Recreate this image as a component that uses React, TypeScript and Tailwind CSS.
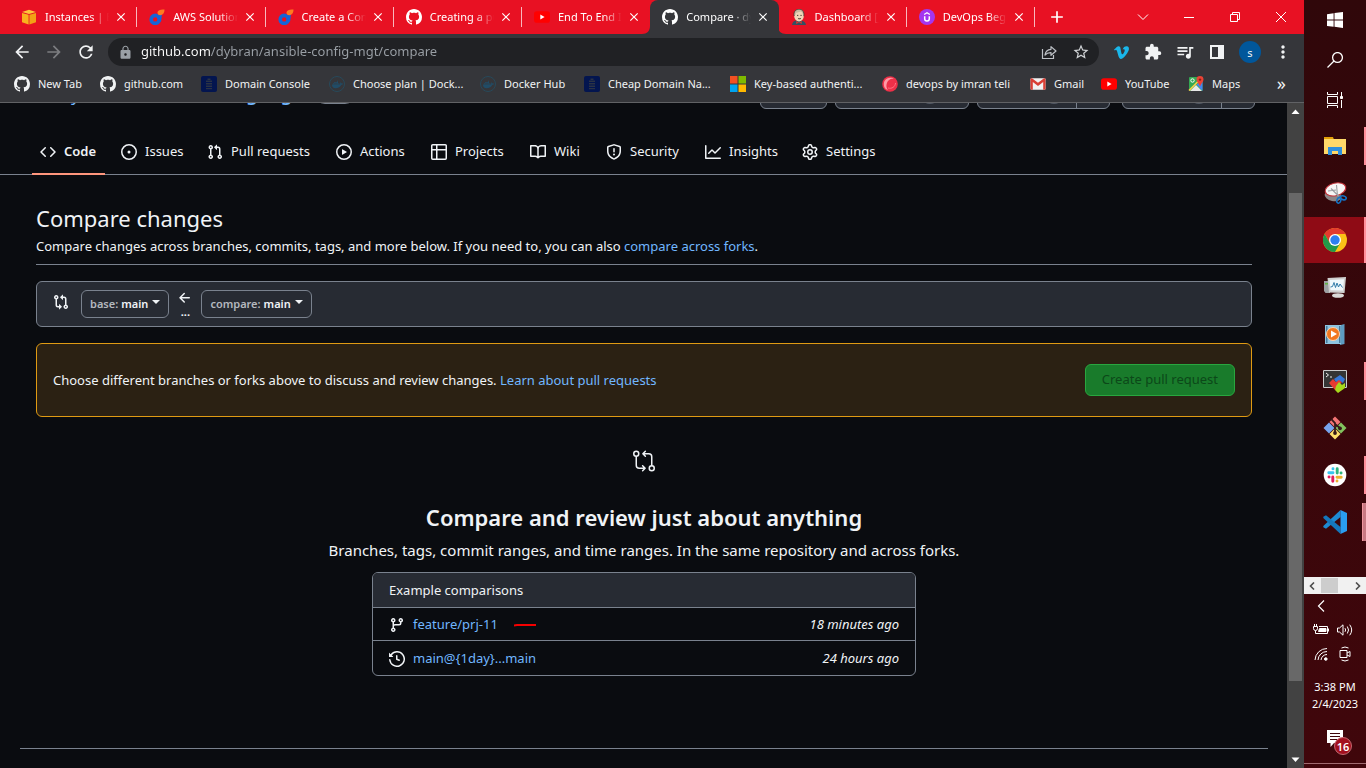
import React from "react";
import type { ReactNode } from "react";
import {
  MdAdd,
  MdArrowBack,
  MdArrowForward,
  MdClose,
  MdExtension,
  MdLock,
  MdMoreVert,
  MdQueueMusic,
  MdRefresh,
  MdStarBorder,
} from "react-icons/md";
import { FaDocker, FaVimeoV } from "react-icons/fa";
import { GoGitCompare } from "react-icons/go";

const octicons = {
  mark: "M8 0c4.42 0 8 3.58 8 8a8.013 8.013 0 0 1-5.45 7.59c-.4.08-.55-.17-.55-.38 0-.27.01-1.13.01-2.2 0-.75-.25-1.23-.54-1.48 1.78-.2 3.65-.88 3.65-3.95 0-.88-.31-1.59-.82-2.15.08-.2.36-1.02-.08-2.12 0 0-.67-.22-2.2.82-.64-.18-1.32-.27-2-.27-.68 0-1.36.09-2 .27-1.53-1.03-2.2-.82-2.2-.82-.44 1.1-.16 1.92-.08 2.12-.51.56-.82 1.28-.82 2.15 0 3.06 1.86 3.75 3.64 3.95-.23.2-.44.55-.51 1.07-.46.21-1.61.55-2.33-.66-.15-.24-.6-.83-1.23-.82-.67.01-.27.38.01.53.34.19.73.9.82 1.13.16.45.68 1.31 2.69.94 0 .67.01 1.3.01 1.49 0 .21-.15.45-.55.38A7.995 7.995 0 0 1 0 8c0-4.42 3.58-8 8-8Z",
  code: "m11.28 3.22 4.25 4.25a.75.75 0 0 1 0 1.06l-4.25 4.25a.749.749 0 0 1-1.275-.326.749.749 0 0 1 .215-.734L13.94 8l-3.72-3.72a.749.749 0 0 1 .326-1.275.749.749 0 0 1 .734.215Zm-6.56 0a.751.751 0 0 1 1.042.018.751.751 0 0 1 .018 1.042L2.06 8l3.72 3.72a.749.749 0 0 1-.326 1.275.749.749 0 0 1-.734-.215L.47 8.53a.75.75 0 0 1 0-1.06Z",
  issue: "M8 9.5a1.5 1.5 0 1 0 0-3 1.5 1.5 0 0 0 0 3ZM8 0a8 8 0 1 1 0 16A8 8 0 0 1 8 0ZM1.5 8a6.5 6.5 0 1 0 13 0 6.5 6.5 0 0 0-13 0Z",
  pull: "M1.5 3.25a2.25 2.25 0 1 1 3 2.122v5.256a2.251 2.251 0 1 1-1.5 0V5.372A2.25 2.25 0 0 1 1.5 3.25Zm5.677-.177L9.573.677A.25.25 0 0 1 10 .854V2.5h1A2.5 2.5 0 0 1 13.5 5v5.628a2.251 2.251 0 1 1-1.5 0V5a1 1 0 0 0-1-1h-1v1.646a.25.25 0 0 1-.427.177L7.177 3.427a.25.25 0 0 1 0-.354ZM3.75 2.5a.75.75 0 1 0 0 1.5.75.75 0 0 0 0-1.5Zm0 9.5a.75.75 0 1 0 0 1.5.75.75 0 0 0 0-1.5Zm8.25.75a.75.75 0 1 0 1.5 0 .75.75 0 0 0-1.5 0Z",
  play: "M8 0a8 8 0 1 1 0 16A8 8 0 0 1 8 0ZM1.5 8a6.5 6.5 0 1 0 13 0 6.5 6.5 0 0 0-13 0Zm4.879-2.773 4.264 2.559a.25.25 0 0 1 0 .428l-4.264 2.559A.25.25 0 0 1 6 10.559V5.442a.25.25 0 0 1 .379-.215Z",
  table: "M0 1.75C0 .784.784 0 1.75 0h12.5C15.216 0 16 .784 16 1.75v12.5A1.75 1.75 0 0 1 14.25 16H1.75A1.75 1.75 0 0 1 0 14.25ZM6.5 6.5v8h7.75a.25.25 0 0 0 .25-.25V6.5Zm8-1.5V1.75a.25.25 0 0 0-.25-.25H6.5V5Zm-13 1.5v7.75c0 .138.112.25.25.25H5v-8ZM5 5V1.5H1.75a.25.25 0 0 0-.25.25V5Z",
  book: "M0 1.75A.75.75 0 0 1 .75 1h4.253c1.227 0 2.317.59 3 1.501A3.743 3.743 0 0 1 11.006 1h4.245a.75.75 0 0 1 .75.75v10.5a.75.75 0 0 1-.75.75h-4.507a2.25 2.25 0 0 0-1.591.659l-.622.621a.75.75 0 0 1-1.06 0l-.622-.621A2.25 2.25 0 0 0 5.258 13H.75a.75.75 0 0 1-.75-.75Zm7.251 10.324.004-5.073-.002-2.253A2.25 2.25 0 0 0 5.003 2.5H1.5v9h3.757a3.75 3.75 0 0 1 1.994.574ZM8.755 4.75l-.004 7.322a3.752 3.752 0 0 1 1.992-.572H14.5v-9h-3.495a2.25 2.25 0 0 0-2.25 2.25Z",
  shield: "M7.467.133a1.748 1.748 0 0 1 1.066 0l5.25 1.68A1.75 1.75 0 0 1 15 3.48V7c0 1.566-.32 3.182-1.303 4.682-.983 1.498-2.585 2.813-5.032 3.855a1.697 1.697 0 0 1-1.33 0c-2.447-1.042-4.049-2.357-5.032-3.855C1.32 10.182 1 8.566 1 7V3.48a1.75 1.75 0 0 1 1.217-1.667Zm.61 1.429a.25.25 0 0 0-.153 0l-5.25 1.68a.25.25 0 0 0-.174.238V7c0 1.358.275 2.666 1.057 3.86.784 1.194 2.121 2.34 4.366 3.297a.196.196 0 0 0 .154 0c2.245-.956 3.582-2.104 4.366-3.298C13.225 9.666 13.5 8.36 13.5 7V3.48a.251.251 0 0 0-.174-.237l-5.25-1.68ZM8.75 4.75v3a.75.75 0 0 1-1.5 0v-3a.75.75 0 0 1 1.5 0ZM9 10.5a1 1 0 1 1-2 0 1 1 0 0 1 2 0Z",
  graph: "M1.5 1.75V13.5h13.75a.75.75 0 0 1 0 1.5H.75a.75.75 0 0 1-.75-.75V1.75a.75.75 0 0 1 1.5 0Zm14.28 2.53-5.25 5.25a.75.75 0 0 1-1.06 0L7 7.06 4.28 9.78a.751.751 0 0 1-1.042-.018.751.751 0 0 1-.018-1.042l3.25-3.25a.75.75 0 0 1 1.06 0L10 7.94l4.72-4.72a.751.751 0 0 1 1.042.018.751.751 0 0 1 .018 1.042Z",
  gear: "M8 0a8.2 8.2 0 0 1 .701.031C9.444.095 9.99.645 10.16 1.29l.288 1.107c.018.066.079.158.212.224.231.114.454.243.668.386.123.082.233.09.299.071l1.103-.303c.644-.176 1.392.021 1.82.63.27.385.506.792.704 1.218.315.675.111 1.422-.364 1.891l-.814.806c-.049.048-.098.147-.088.294.016.257.016.515 0 .772-.01.147.038.246.088.294l.814.806c.475.469.679 1.216.364 1.891a7.977 7.977 0 0 1-.704 1.217c-.428.61-1.176.807-1.82.63l-1.102-.302c-.067-.019-.177-.011-.3.071a5.909 5.909 0 0 1-.668.386c-.133.066-.194.158-.211.224l-.29 1.106c-.168.646-.715 1.196-1.458 1.26a8.006 8.006 0 0 1-1.402 0c-.743-.064-1.289-.614-1.458-1.26l-.289-1.106c-.018-.066-.079-.158-.212-.224a5.738 5.738 0 0 1-.668-.386c-.123-.082-.233-.09-.299-.071l-1.103.303c-.644.176-1.392-.021-1.82-.63a8.12 8.12 0 0 1-.704-1.218c-.315-.675-.111-1.422.363-1.891l.815-.806c.05-.048.098-.147.088-.294a6.214 6.214 0 0 1 0-.772c.01-.147-.038-.246-.088-.294l-.815-.806C.635 6.045.431 5.298.746 4.623a7.92 7.92 0 0 1 .704-1.217c.428-.61 1.176-.807 1.82-.63l1.102.302c.067.019.177.011.3-.071.214-.143.437-.272.668-.386.133-.066.194-.158.211-.224l.29-1.106C6.009.645 6.556.095 7.299.03 7.53.01 7.764 0 8 0Zm-.571 1.525c-.036.003-.108.036-.137.146l-.289 1.105c-.147.561-.549.967-.998 1.189-.173.086-.34.183-.5.29-.417.278-.97.423-1.529.27l-1.103-.303c-.109-.03-.175.016-.195.045-.22.312-.412.644-.573.99-.014.031-.021.11.059.19l.815.806c.411.406.562.957.53 1.456a4.709 4.709 0 0 0 0 .582c.032.499-.119 1.05-.53 1.456l-.815.806c-.081.08-.073.159-.059.19.162.346.353.677.573.989.02.03.085.076.195.046l1.102-.303c.56-.153 1.113-.008 1.53.27.161.107.328.204.501.29.447.222.85.629.997 1.189l.289 1.105c.029.109.101.143.137.146a6.6 6.6 0 0 0 1.142 0c.036-.003.108-.036.137-.146l.289-1.105c.147-.561.549-.967.998-1.189.173-.086.34-.183.5-.29.417-.278.97-.423 1.529-.27l1.103.303c.109.029.175-.016.195-.045.22-.313.411-.644.573-.99.014-.031.021-.11-.059-.19l-.815-.806c-.411-.406-.562-.957-.53-1.456a4.709 4.709 0 0 0 0-.582c-.032-.499.119-1.05.53-1.456l.815-.806c.081-.08.073-.159.059-.19a6.464 6.464 0 0 0-.573-.989c-.02-.03-.085-.076-.195-.046l-1.102.303c-.56.153-1.113.008-1.53-.27a4.44 4.44 0 0 0-.501-.29c-.447-.222-.85-.629-.997-1.189l-.289-1.105c-.029-.11-.101-.143-.137-.146a6.6 6.6 0 0 0-1.142 0ZM11 8a3 3 0 1 1-6 0 3 3 0 0 1 6 0ZM9.5 8a1.5 1.5 0 1 0-3.001.001A1.5 1.5 0 0 0 9.5 8Z",
  compare: "M9.573.677A.25.25 0 0 1 10 .854V2.5h1A2.5 2.5 0 0 1 13.5 5v5.628a2.251 2.251 0 1 1-1.5 0V5a1 1 0 0 0-1-1h-1v1.646a.25.25 0 0 1-.427.177L7.177 3.427a.25.25 0 0 1 0-.354ZM6 12v-1.646a.25.25 0 0 1 .427-.177l2.396 2.396a.25.25 0 0 1 0 .354l-2.396 2.396A.25.25 0 0 1 6 15.146V13.5H5A2.5 2.5 0 0 1 2.5 11V5.372a2.25 2.25 0 1 1 1.5 0V11a1 1 0 0 0 1 1ZM4 3.25a.75.75 0 1 0-1.5 0 .75.75 0 0 0 1.5 0ZM12.75 12a.75.75 0 1 0 0 1.5.75.75 0 0 0 0-1.5Z",
  history: "m.427 1.927 1.215 1.215a8.002 8.002 0 1 1-1.6 5.685.75.75 0 1 1 1.493-.154 6.5 6.5 0 1 0 1.18-4.458l1.358 1.358A.25.25 0 0 1 3.896 6H.25A.25.25 0 0 1 0 5.75V2.104a.25.25 0 0 1 .427-.177ZM7.75 4a.75.75 0 0 1 .75.75v2.992l2.028.812a.75.75 0 0 1-.557 1.392l-2.5-1A.751.751 0 0 1 7 8.25v-3.5A.75.75 0 0 1 7.75 4Z",
  branch: "M9.5 3.25a2.25 2.25 0 1 1 3 2.122V6A2.5 2.5 0 0 1 10 8.5H6a1 1 0 0 0-1 1v1.128a2.251 2.251 0 1 1-1.5 0V5.372a2.25 2.25 0 1 1 1.5 0v1.836A2.493 2.493 0 0 1 6 7h4a1 1 0 0 0 1-1v-.628A2.25 2.25 0 0 1 9.5 3.25Zm-6 0a.75.75 0 1 0 1.5 0 .75.75 0 0 0-1.5 0Zm8.25-.75a.75.75 0 1 0 0 1.5.75.75 0 0 0 0-1.5ZM4.25 12a.75.75 0 1 0 0 1.5.75.75 0 0 0 0-1.5Z",
  arrowLeft: "M7.78 12.53a.75.75 0 0 1-1.06 0L2.47 8.28a.75.75 0 0 1 0-1.06l4.25-4.25a.751.751 0 0 1 1.042.018.751.751 0 0 1 .018 1.042L4.81 7h7.44a.75.75 0 0 1 0 1.5H4.81l2.97 2.97a.75.75 0 0 1 0 1.06Z",
};

function Octicon({ name }: { name: keyof typeof octicons }) {
  return (
    <svg viewBox="0 0 16 16" className="size-4 shrink-0" fill="currentColor" fillRule="evenodd" aria-hidden="true">
      <path d={octicons[name]} />
    </svg>
  );
}

/* ---------- Site icons ---------- */

function Svg16({ children }: { children: ReactNode }) {
  return (
    <svg viewBox="0 0 16 16" className="size-4 shrink-0" aria-hidden="true">
      {children}
    </svg>
  );
}

const AwsCube = () => (
  <Svg16>
    <path d="M1 3 8 0.8 15 3 8 5Z" fill="#fdc53a" />
    <path d="M1 4 7.6 5.8V15.4L1 13.2Z" fill="#f9b21d" />
    <path d="M15 4 8.4 5.8V15.4L15 13.2Z" fill="#f3a015" />
  </Svg16>
);

const FlameRing = () => (
  <Svg16>
    <circle cx="6.2" cy="10.4" r="4" fill="none" stroke="#1565d8" strokeWidth="3.6" />
    <path d="M9 6.5 13 5 12.2 12 10 14Z" fill="#1565d8" />
    <path d="M8.5 3.2C9 1 12 .2 15.5.6 15.6 3.6 14.4 6 11.6 6.3 9.6 6.4 8.2 5 8.5 3.2Z" fill="#ff7a1f" />
  </Svg16>
);

const YouTube = () => (
  <Svg16>
    <rect x="0" y="2.3" width="16" height="11.4" rx="2.8" fill="#ff0000" />
    <path d="M6.3 5.5v5l4.3-2.5Z" fill="#fff" />
  </Svg16>
);

const Jenkins = () => (
  <Svg16>
    <path d="M1 16c.3-3 2-4.2 4-4.6h5c3 .4 4.6 2 5 4.6Z" fill="#335061" />
    <ellipse cx="8" cy="6.4" rx="4.9" ry="6.2" fill="#f0d6b7" />
    <path d="M3.2 7C2.3 2.500 5 .1 8 .1c3.400 0 5.500 2.600 4.800 6-1-.6-1.200-2.700-3-3.600-2 1.100-5 .3-5.200 3Z" fill="#c9b9a0" />
    <path d="M3.200 7C2.200 2.500 5 .2 8 .2s5.600 2.200 4.800 7" fill="none" stroke="#40332c" strokeWidth=".8" />
    <path d="M6 6.400h1.300M9.400 6.400h1.300M7 9.400c1 .7 2.100.5 3 0" stroke="#40332c" strokeWidth=".9" />
    <path d="M8 13.500 5.200 12v3ZM8 13.500l2.800-1.500v3Z" fill="#d33833" />
  </Svg16>
);

const Udemy = () => (
  <Svg16>
    <circle cx="8" cy="8" r="8" fill="#a435f0" />
    <path d="M5.700 7.300v2.400a2.300 2.300 0 0 0 4.600 0V7.300" fill="none" stroke="#fff" strokeWidth="1.500" />
    <path d="M5.200 5.400 8 3.700l2.800 1.700" fill="none" stroke="#fff" strokeWidth="1.200" />
  </Svg16>
);

const DomainIcon = () => (
  <Svg16>
    <rect width="16" height="16" rx="2" fill="#03154f" />
    <path d="M6.500 2.500h3V4h-3ZM5 4.500h6V6H5ZM5 7h6v1.500H5ZM5 9.500h6V11H5ZM5 12h6v1.300H5Z" fill="#2b3345" />
  </Svg16>
);

const DockerIcon = () => (
  <span className="grid size-4 shrink-0 place-items-center rounded-full border border-[#27495a] text-[#214c66]">
    <FaDocker size={11} aria-hidden="true" />
  </span>
);

const Microsoft = () => (
  <Svg16>
    <path d="M0 0h7.500v7.500H0Z" fill="#f25022" />
    <path d="M8.500 0H16v7.500H8.500Z" fill="#7fba00" />
    <path d="M0 8.500h7.500V16H0Z" fill="#00a4ef" />
    <path d="M8.500 8.500H16V16H8.500Z" fill="#ffb900" />
  </Svg16>
);

const RedBall = () => (
  <Svg16>
    <circle cx="8" cy="8" r="7.800" fill="#ee3048" />
    <path d="M2.500 5C5 1 10 1 12 3c-3-.6-6 .5-7.400 5.200C4 10.500 5 13 6 14 2 13 1 8.500 2.500 5Z" fill="#ff9aa5" />
    <path d="M6 12c4 1 7-1 7.600-5" fill="none" stroke="#ff7282" />
  </Svg16>
);

const Gmail = () => (
  <Svg16>
    <rect x=".5" y="2.3" width="15" height="11.5" rx="1" fill="#f2f2f2" />
    <path d="M.5 3.3v9.5a1 1 0 0 0 1 1h1.300V6L8 10l5.200-4v7.800h1.300a1 1 0 0 0 1-1V3.300c0-1-1-1.400-1.800-.8L8 6.800 2.300 2.500C1.500 1.900.5 2.300.5 3.300Z" fill="#d93f35" />
  </Svg16>
);

const Maps = () => (
  <Svg16>
    <rect x="1" y="1" width="13.5" height="14" rx="1" fill="#34a853" />
    <path d="m2 15 6-6 6 6Z" fill="#e8e8e8" />
    <path d="m8.500 8.500 6-4V15Z" fill="#4285f4" />
    <path d="M1 14.500 13.500 2" stroke="#fbd04a" strokeWidth="1.6" />
    <circle cx="4.5" cy="4.5" r="1.7" fill="none" stroke="#fff" />
    <path d="M12 0a3.500 3.500 0 0 1 3.500 3.600C15.500 6 13 7.500 12 10.500 11 7.500 8.500 6 8.500 3.600A3.500 3.500 0 0 1 12 0Z" fill="#ea4335" />
    <circle cx="12" cy="3.6" r="1.2" fill="#8c1d14" />
  </Svg16>
);

/* ---------- Browser frame ---------- */

const tabs: { title: string; icon: ReactNode; active?: boolean }[] = [
  { title: "Instances | EC2", icon: <AwsCube /> },
  { title: "AWS Solutions", icon: <FlameRing /> },
  { title: "Create a Cont", icon: <FlameRing /> },
  { title: "Creating a pull", icon: <Octicon name="mark" /> },
  { title: "End To End Im", icon: <YouTube /> },
  { title: "Compare · dyb", icon: <Octicon name="mark" />, active: true },
  { title: "Dashboard [Je", icon: <Jenkins /> },
  { title: "DevOps Beginn", icon: <Udemy /> },
];

function TabStrip() {
  return (
    <div className="flex h-[34px] shrink-0 items-center bg-[#e81123] pl-[9px] text-white">
      <div role="tablist" className="grid h-full w-[1026px] grid-cols-8">
        {tabs.map((tab, i) => (
          <div
            key={i}
            className={
              tab.active
                ? "relative flex min-w-0 items-center rounded-t-lg bg-[#35363a] pr-2 pl-3"
                : i === 4
                  ? "relative flex min-w-0 items-center pr-2 pl-3"
                  : "relative flex min-w-0 items-center pr-2 pl-3 after:absolute after:right-0 after:h-5 after:w-px after:bg-white/70"
            }
          >
            {tab.active && (
              <svg viewBox="0 0 144 8" className="absolute bottom-0 -left-2 h-2 w-[144px]" fill="#35363a" aria-hidden="true">
                <path d="M8 0v8H0c5 0 8-3 8-8ZM136 0v8h8c-5 0-8-3-8-8Z" />
              </svg>
            )}
            <button role="tab" aria-selected={!!tab.active} className="flex min-w-0 flex-1 items-center gap-2 text-left">
              {tab.icon}
              <span className="min-w-0 flex-1 overflow-hidden mask-r-from-70% mask-r-to-100% text-[11px] leading-4 whitespace-nowrap">
                {tab.title}
              </span>
            </button>
            <button aria-label="Close tab" className="ml-1 grid size-4 shrink-0 place-items-center">
              <MdClose size={14} />
            </button>
          </div>
        ))}
      </div>
      <button aria-label="New tab" className="ml-3 grid size-5 place-items-center">
        <MdAdd size={20} />
      </button>
      <div className="ml-auto flex h-7 items-center">
        <button aria-label="Search tabs" className="grid w-[46px] place-items-center">
          <svg viewBox="0 0 12 12" className="size-3" fill="none" stroke="currentColor"><path d="m1 3.500 5 5 5-5" /></svg>
        </button>
        <button aria-label="Minimize" className="grid w-[46px] place-items-center">
          <svg viewBox="0 0 12 12" className="size-3" stroke="currentColor"><path d="M1 6.500h10" /></svg>
        </button>
        <button aria-label="Restore" className="grid w-[46px] place-items-center">
          <svg viewBox="0 0 12 12" className="size-3" fill="none" stroke="currentColor"><path d="M1.500 3.500h7v7h-7ZM3.500 3.500v-2h7v7h-2" /></svg>
        </button>
        <button aria-label="Close" className="grid w-[46px] place-items-center">
          <svg viewBox="0 0 12 12" className="size-3" stroke="currentColor"><path d="m1 1 10 10M11 1 1 11" /></svg>
        </button>
      </div>
    </div>
  );
}

function Toolbar() {
  return (
    <div className="flex h-9 shrink-0 items-center bg-[#35363a] pr-[11px] pl-3 text-[#f1f3f4]">
      <button aria-label="Back" className="grid size-5 place-items-center"><MdArrowBack size={20} /></button>
      <button aria-label="Forward" className="ml-3 grid size-5 place-items-center text-[#7c7d80]"><MdArrowForward size={20} /></button>
      <button aria-label="Reload" className="ml-3 grid size-5 place-items-center"><MdRefresh size={20} /></button>
      <div className="ml-3 flex h-7 flex-1 items-center rounded-full bg-[#202124] pr-2 pl-2.5 text-[#9aa0a6]">
        <MdLock size={15} className="shrink-0" aria-hidden="true" />
        <label htmlFor="address" className="sr-only">Address</label>
        <input
          id="address"
          defaultValue="github.com/dybran/ansible-config-mgt/compare"
          className="ml-2 min-w-0 flex-1 bg-[linear-gradient(90deg,#ffffff_70px,#9aa0a6_70px)] bg-clip-text text-[13px] text-transparent outline-none"
        />
        <button aria-label="Share" className="grid size-5 place-items-center text-[#bdc1c6]">
          <svg viewBox="0 0 16 16" className="size-4" fill="none" stroke="currentColor" strokeWidth="1.2">
            <path d="M1.500 5v9.500h11V11" />
            <path d="M4 11c.4-3.500 2.500-5.500 6-5.700V2.600L15 7l-5 4.300V8.600C7.500 8.500 5.600 9.200 4 11Z" strokeLinejoin="round" />
          </svg>
        </button>
        <button aria-label="Bookmark this page" className="ml-3 grid size-5 place-items-center text-[#d0d3d6]"><MdStarBorder size={18} /></button>
      </div>
      <div className="ml-3 flex items-center gap-3">
        <button aria-label="Vimeo" className="grid size-5 place-items-center text-[#1ab7ea]"><FaVimeoV size={17} /></button>
        <button aria-label="Extensions" className="grid size-5 place-items-center"><MdExtension size={18} /></button>
        <button aria-label="Media controls" className="grid size-5 place-items-center"><MdQueueMusic size={20} /></button>
        <button aria-label="Side panel" className="grid size-5 place-items-center">
          <svg viewBox="0 0 14 14" className="size-3.5"><path fill="currentColor" fillRule="evenodd" d="M0 0h14v14H0ZM2 2v10h6V2Z" /></svg>
        </button>
        <button aria-label="Profile" className="grid size-[22px] place-items-center rounded-full bg-[#01579b] text-[11px] leading-none">s</button>
        <button aria-label="Menu" className="grid size-5 place-items-center"><MdMoreVert size={20} /></button>
      </div>
    </div>
  );
}

const bookmarks: { label: string; icon: ReactNode; width: string }[] = [
  { label: "New Tab", icon: <Octicon name="mark" />, width: "w-[86px]" },
  { label: "github.com", icon: <Octicon name="mark" />, width: "w-[101px]" },
  { label: "Domain Console", icon: <DomainIcon />, width: "w-32" },
  { label: "Choose plan | Dock...", icon: <DockerIcon />, width: "w-[151px]" },
  { label: "Docker Hub", icon: <DockerIcon />, width: "w-[104px]" },
  { label: "Cheap Domain Na...", icon: <DomainIcon />, width: "w-[146px]" },
  { label: "Key-based authenti...", icon: <Microsoft />, width: "w-[152px]" },
  { label: "devops by imran teli", icon: <RedBall />, width: "w-[148px]" },
  { label: "Gmail", icon: <Gmail />, width: "w-[71px]" },
  { label: "YouTube", icon: <YouTube />, width: "w-[87px]" },
  { label: "Maps", icon: <Maps />, width: "w-16" },
];

function BookmarksBar() {
  return (
    <div className="flex h-[33px] shrink-0 items-center border-b border-[#616265] bg-[#35363a] pr-[18px] pb-1 pl-3.5 text-[11px] text-[#f1f3f4]">
      {bookmarks.map((b, i) => (
        <a key={i} href="#" className={`flex shrink-0 items-center gap-2 whitespace-nowrap ${b.width}`}>
          {b.icon}
          {b.label}
        </a>
      ))}
      <button aria-label="More bookmarks" className="ml-auto pb-0.5 text-lg leading-none">»</button>
    </div>
  );
}

/* ---------- Repository page ---------- */

function RepoHeader() {
  const button = "flex h-7 items-end rounded-md border border-[#7a828e] bg-[#272b33]";
  const counter = "mb-1 ml-auto h-5 w-5 rounded-full bg-[#525864]";
  return (
    <div className="flex h-1.5 shrink-0 items-end overflow-hidden pr-8 pl-[60px]">
      <div className="flex items-end pb-[3px] text-[18px] leading-6 whitespace-nowrap text-[#71b7ff]">
        <a href="#">dybran</a>
        <span className="mx-1 text-[#f0f3f6]">/</span>
        <a href="#" className="font-semibold">ansible-config-mgt</a>
        <span className="mb-0.5 ml-4 h-5 w-10 rounded-full border border-[#7a828e]" />
      </div>
      <div className="ml-auto flex">
        <div className={`${button} w-[67px]`} />
        <div className={`${button} ml-2 w-[134px] pr-7`}><span className={counter} /></div>
        <div className={`${button} ml-2 w-[133px]`}>
          <span className={`${counter} mr-3`} />
          <span className="h-full w-[33px] border-l border-[#7a828e]" />
        </div>
        <div className={`${button} ml-3 w-[133px]`}>
          <span className={`${counter} mr-3`} />
          <span className="h-full w-[33px] border-l border-[#7a828e]" />
        </div>
      </div>
    </div>
  );
}

const repoNav: { label: string; icon: keyof typeof octicons; width: string }[] = [
  { label: "Code", icon: "code", width: "w-[73px]" },
  { label: "Issues", icon: "issue", width: "w-[78px]" },
  { label: "Pull requests", icon: "pull", width: "w-[121px]" },
  { label: "Actions", icon: "play", width: "w-[87px]" },
  { label: "Projects", icon: "table", width: "w-[91px]" },
  { label: "Wiki", icon: "book", width: "w-[68px]" },
  { label: "Security", icon: "shield", width: "w-[91px]" },
  { label: "Insights", icon: "graph", width: "w-[89px]" },
  { label: "Settings", icon: "gear", width: "w-[91px]" },
];

function RepoNav() {
  return (
    <nav className="mt-[18px] flex h-12 shrink-0 gap-2 border-b border-[#7a828e] pl-8">
      {repoNav.map((item, i) => (
        <a
          key={item.label}
          href="#"
          className={`-mb-px flex items-center gap-2 border-b-2 px-2 pt-[3px] whitespace-nowrap ${item.width} ${
            i === 0 ? "border-[#ff967d] font-semibold" : "border-transparent"
          }`}
        >
          <Octicon name={item.icon} />
          {item.label}
        </a>
      ))}
    </nav>
  );
}

function BranchButton({ prefix }: { prefix: string }) {
  return (
    <button className="flex h-7 items-center rounded-md border border-[#7a828e] px-2 text-[11px] font-semibold whitespace-nowrap">
      <span className="text-[#b4b8be]">{prefix}:</span>
      <span className="ml-[3px]">main</span>
      <svg viewBox="0 0 8 4" className="mb-1 ml-1 h-1 w-2" fill="currentColor" aria-hidden="true"><path d="M0 0h8L4 4Z" /></svg>
    </button>
  );
}

function ComparePage() {
  return (
    <main className="flex min-w-0 flex-1 flex-col overflow-hidden bg-[#0a0c10] text-[13px] text-[#f0f3f6]">
      <RepoHeader />
      <RepoNav />
      <div className="pr-[35px] pl-9">
        <header className="border-b border-[#7a828e] pt-[27px] pb-2">
          <h1 className="mb-0.5 text-[22px] leading-8">Compare changes</h1>
          <p className="leading-5">
            Compare changes across branches, commits, tags, and more below. If you need to, you can also{" "}
            <a href="#" className="text-[#71b7ff]">compare across forks</a>.
          </p>
        </header>

        <div className="mt-4 flex h-[46px] items-center rounded-md border border-[#7a828e] bg-[#272b33] px-4">
          <span className="mb-1"><Octicon name="compare" /></span>
          <span className="ml-3"><BranchButton prefix="base" /></span>
          <span className="mx-2 flex w-4 flex-col items-center">
            <Octicon name="arrowLeft" />
            <span className="text-[11px] leading-3 font-bold">...</span>
          </span>
          <BranchButton prefix="compare" />
        </div>

        <div className="mt-4 flex h-[74px] items-center justify-between rounded-md border border-[#e09b13] bg-[#2b2113] px-4">
          <p className="pt-0.5">
            Choose different branches or forks above to discuss and review changes.{" "}
            <a href="#" className="text-[#71b7ff]">Learn about pull requests</a>
          </p>
          <button disabled className="h-8 rounded-md border border-[#29a63f] bg-[#197b2b] px-4 text-[#0c4819]">
            Create pull request
          </button>
        </div>

        <section className="mt-8 flex flex-col items-center">
          <GoGitCompare size={24} aria-hidden="true" />
          <h2 className="mt-7 text-[22px] leading-8 font-semibold">Compare and review just about anything</h2>
          <p className="mt-[5px] text-[15px] leading-6">
            Branches, tags, commit ranges, and time ranges. In the same repository and across forks.
          </p>
          <div className="mt-2.5 w-full max-w-[544px] overflow-hidden rounded-md border border-[#7a828e]">
            <h3 className="flex h-[34px] items-center bg-[#272b33] px-4 pt-0.5">Example comparisons</h3>
            <ul>
              <li className="flex h-[33px] items-center border-t border-[#7a828e] px-4 pt-0.5">
                <Octicon name="branch" />
                <a href="#" className="ml-2 text-[#71b7ff]">feature/prj-11</a>
                <svg viewBox="0 0 22 4" className="ml-4 h-1 w-[22px]" fill="none" stroke="#f50000" strokeWidth="2" aria-hidden="true">
                  <path d="M0 2.500 3 2h19" />
                </svg>
                <em className="ml-auto">18 minutes ago</em>
              </li>
              <li className="flex h-[35px] items-center border-t border-[#7a828e] px-4 pt-0.5">
                <Octicon name="history" />
                <a href="#" className="ml-2 text-[#71b7ff]">main@{"{1day}"}...main</a>
                <em className="ml-auto">24 hours ago</em>
              </li>
            </ul>
          </div>
        </section>
      </div>
      <hr className="mr-[19px] ml-5 mt-[72px] border-[#7a828e]" />
    </main>
  );
}

function PageScrollbar() {
  return (
    <div className="flex w-[17px] shrink-0 flex-col items-center bg-[#424242]" aria-hidden="true">
      <svg viewBox="0 0 17 17" className="size-[17px]"><path d="m4.500 11 4-4.500 4 4.500Z" fill="#fff" /></svg>
      <span className="grow-[73]" />
      <span className="w-[13px] grow-[488] bg-[#686868]" />
      <span className="grow-[70]" />
      <svg viewBox="0 0 17 17" className="size-[17px]"><path d="m4.500 6.500 4 4.500 4-4.500Z" fill="#fff" /></svg>
    </div>
  );
}

/* ---------- Taskbar ---------- */

function Svg24({ children }: { children: ReactNode }) {
  return (
    <svg viewBox="0 0 24 24" className="size-6" aria-hidden="true">
      {children}
    </svg>
  );
}

const apps: { name: string; icon: ReactNode; state?: "open" | "active" | "multi" }[] = [
  {
    name: "File Explorer",
    state: "open",
    icon: (
      <Svg24>
        <path d="M1 3h9l1 2.500H1Z" fill="#e3a008" />
        <path d="M1 5h22v15H1Z" fill="#ffd869" />
        <path d="M5 13h14v8h-4v-4H9v4H5Z" fill="#2f8fdd" />
      </Svg24>
    ),
  },
  {
    name: "Snipping Tool",
    icon: (
      <Svg24>
        <ellipse cx="10" cy="15" rx="8.5" ry="5" fill="#8b8688" transform="rotate(12 10 15)" />
        <ellipse cx="12.5" cy="8.5" rx="10.5" ry="6.3" fill="#f6f6f6" stroke="#c4343c" strokeWidth="1.2" transform="rotate(-14 12 8.500)" />
        <path d="m8 7.500 8 8M13.500 4l1 11M5 10l8-1" stroke="#9a9da1" strokeWidth="1.1" />
        <ellipse cx="16" cy="19.3" rx="1.9" ry="3" fill="none" stroke="#1572c4" strokeWidth="1.6" transform="rotate(20 16 19)" />
        <ellipse cx="20.5" cy="16.7" rx="3" ry="1.9" fill="none" stroke="#1572c4" strokeWidth="1.6" transform="rotate(15 20 16)" />
      </Svg24>
    ),
  },
  {
    name: "Chrome",
    state: "active",
    icon: (
      <Svg24>
        <circle cx="12" cy="12" r="12" fill="#fbc116" />
        <path d="M12 6h10.400A12 12 0 0 0 1.600 6l5.200 9Z" fill="#e33b2e" />
        <path d="M1.600 6A12 12 0 0 0 12 24l5.200-9H6.800Z" fill="#229a4a" />
        <circle cx="12" cy="12" r="6" fill="#fff" />
        <circle cx="12" cy="12" r="4.7" fill="#2d7ff0" />
      </Svg24>
    ),
  },
  {
    name: "Resource Monitor",
    icon: (
      <Svg24>
        <path d="M1 6h6v12H2.500L1 16Z" fill="#9da0a2" />
        <path d="M2 8h3v1.500H2Z" fill="#62b443" />
        <path d="m4.500 3 18.500-1-1.500 16-15.500-.5Z" fill="#cfd0cf" />
        <path d="m6.500 5 14.500-.8-1 11.300-12.500-.3Z" fill="#eff8fc" />
        <path d="m7.500 12 2-.5 1.500-4 1.500 5L14 8l1.500 4 1.500-3 2.500 3.500" fill="none" stroke="#327caa" />
        <ellipse cx="15" cy="20.5" rx="6" ry="2.3" fill="#dadad8" />
      </Svg24>
    ),
  },
  {
    name: "Media Player",
    icon: (
      <Svg24>
        <path d="m18 3 3.500-1v20L17 23Z" fill="#5e9cc2" />
        <path d="M2 3h16v19H2Z" fill="#8fc4e0" />
        <path d="M3 4h1.500v17H3ZM16 4h1.500v17H16Z" fill="#477b9c" />
        <circle cx="10" cy="12" r="6.5" fill="#f27720" stroke="#fbd3b0" />
        <path d="M8 8.500v7l6-3.500Z" fill="#fff" />
      </Svg24>
    ),
  },
  {
    name: "Terminal",
    state: "open",
    icon: (
      <Svg24>
        <path d="M.5 1.500h23v17H.5Z" fill="#353535" stroke="#cbcbcb" />
        <path d="m3 4 2.500 2L3 8M7 8h2" fill="none" stroke="#eee" />
        <path d="m6 14 4-4 3 3 3-3 3 3-7 8Z" fill="#e63b32" />
        <path d="m11 10 6-4 5 4-2 4-4-3-3 2Z" fill="#3778d8" />
        <path d="m13 17 3-4 3 3 3-2v5l-7 5-3-3Z" fill="#a7d81b" />
      </Svg24>
    ),
  },
  {
    name: "Git Bash",
    icon: (
      <Svg24>
        <path d="m12 .5 5.500 5.500L12 11.500 6.500 6Z" fill="#f27474" />
        <path d="M6 6.500 11.500 12 6 17.500.5 12Z" fill="#78a5ef" />
        <path d="M18 6.500 23.500 12 18 17.500 12.500 12Z" fill="#82c35e" />
        <path d="m12 12.500 5.500 5.500-5.500 5.500L6.500 18Z" fill="#ffe06b" />
        <path d="M9 3v1l3 3v11M12 8l5 4" fill="none" stroke="#35191a" strokeWidth="1.8" />
        <circle cx="12" cy="17" r="1.9" fill="#35191a" />
        <circle cx="17" cy="12.3" r="1.9" fill="#35191a" />
      </Svg24>
    ),
  },
  {
    name: "Slack",
    state: "open",
    icon: (
      <Svg24>
        <circle cx="12" cy="12" r="11.3" fill="#fff" />
        <g fill="none" strokeWidth="2.9" strokeLinecap="round">
          <path d="M5.800 9.700h4.200M10 5.800v.1" stroke="#36c5f0" />
          <path d="M14.200 5.800V10M18 10h.1" stroke="#2eb67d" />
          <path d="M14 14.200h4.200M14 18v.1" stroke="#ecb22e" />
          <path d="M9.800 14v4.200M6 14h.1" stroke="#e01e5a" />
        </g>
      </Svg24>
    ),
  },
  {
    name: "Visual Studio Code",
    state: "multi",
    icon: (
      <Svg24>
        <path d="M17.500 0v7L3 18.700.3 17.200V16L17.500 0Z" fill="#1f8ad2" />
        <path d="M17.500 24v-7L3 5.300.3 6.800V8L17.500 24Z" fill="#1477bd" />
        <path d="M17.500 0 24 3v18l-6.500 3Z" fill="#2a9df0" />
      </Svg24>
    ),
  },
];

function Taskbar() {
  return (
    <aside className="flex w-[62px] shrink-0 flex-col bg-linear-to-b from-[#30070a] to-[#40060b] text-white">
      <button aria-label="Start" className="grid h-10 shrink-0 place-items-center">
        <svg viewBox="0 0 16 16" className="size-4" fill="currentColor"><path d="M0 2.200 6.600 1.200v6.300H0ZM7.500 1.100 16 0v7.500H7.500ZM0 8.500h6.600v6.300L0 13.900ZM7.500 8.500H16V16l-8.500-1.200Z" /></svg>
      </button>
      <button aria-label="Search" className="grid h-10 shrink-0 place-items-center">
        <svg viewBox="0 0 16 16" className="size-4" fill="none" stroke="currentColor" strokeWidth="1.3"><circle cx="10.5" cy="5.5" r="4.9" /><path d="m7 9-6.500 6.500" /></svg>
      </button>
      <button aria-label="Task view" className="grid h-10 shrink-0 place-items-center">
        <svg viewBox="0 0 16 16" className="size-4" fill="none" stroke="currentColor"><path d="M.5 0v2.500h10V0M.5 4.500h10v7H.5ZM.5 16v-2.500h10V16M14.500 0v4M14.500 8v8" /><path d="M13.500 4.500h2v2h-2Z" fill="currentColor" /></svg>
      </button>
      <div className="mt-[3px] flex flex-col gap-px">
        {apps.map((app) => (
          <button
            key={app.name}
            aria-label={app.name}
            className={
              app.state === "active"
                ? "relative grid h-[46px] place-items-center border-r-2 border-[#ff8f9b] bg-[#8f0b15] pl-0.5"
                : "relative grid h-[46px] place-items-center"
            }
          >
            {app.icon}
            {app.state === "open" && <span className="absolute right-0 h-[38px] w-0.5 bg-[#ff8f9b]" />}
            {app.state === "multi" && (
              <span className="absolute right-0 h-[38px] w-1 border-l border-[#f097a0] bg-[#c97983]" />
            )}
          </button>
        ))}
      </div>

      <div className="mt-auto flex h-[17px] shrink-0 items-center justify-between bg-[#f1f1f1] px-1 text-[#4d4d4d]" aria-hidden="true">
        <svg viewBox="0 0 8 8" className="size-2" fill="none" stroke="currentColor" strokeWidth="1.6"><path d="M6 .5 2.500 4 6 7.500" /></svg>
        <span className="mr-3 h-[15px] w-[17px] bg-[#cdcdcd]" />
        <svg viewBox="0 0 8 8" className="size-2" fill="none" stroke="currentColor" strokeWidth="1.6"><path d="M2 .5 5.500 4 2 7.500" /></svg>
      </div>
      <div className="flex shrink-0 flex-col items-center border-b border-[#a06a70]">
        <button aria-label="Show hidden icons" className="mr-7 grid h-6 place-items-center">
          <svg viewBox="0 0 8 12" className="h-3 w-2" fill="none" stroke="currentColor" strokeWidth="1.2"><path d="M7 .5 1.500 6 7 11.500" /></svg>
        </button>
        <div className="mr-1 grid grid-cols-2 gap-x-2">
          <button aria-label="Battery" className="grid h-6 place-items-center">
            <svg viewBox="0 0 16 12" className="h-3 w-4" fill="none" stroke="currentColor"><path d="M6 2.500h8.500v7h-11M15.500 4.500v3M.5 2.500h4v2a2 2 0 0 1-4 0ZM1.500 0v2M3.500 0v2M2.500 6.500V9.500h2" /><path d="M6.500 4.500H13v3H5.500Z" fill="currentColor" /></svg>
          </button>
          <button aria-label="Volume" className="grid h-6 place-items-center">
            <svg viewBox="0 0 16 12" className="h-3 w-4" fill="none" stroke="currentColor"><path d="M.5 4h2L6 .8v10.400L2.500 8h-2ZM8 4.200q1.300 1.800 0 3.600M10.300 2.500q2.500 3.500 0 7M12.700.7q4 5.300 0 10.600" /></svg>
          </button>
          <button aria-label="Network" className="grid h-6 place-items-center">
            <svg viewBox="0 0 14 14" className="size-3.5" fill="none" stroke="currentColor"><path d="M1 13A12 12 0 0 1 13 1.500M4 13a9 9 0 0 1 9-8.500M7 13a6 6 0 0 1 6-5.500" /><circle cx="11.8" cy="12" r="1.3" fill="currentColor" /></svg>
          </button>
          <button aria-label="Meet Now" className="grid h-6 place-items-center">
            <svg viewBox="0 0 12 16" className="h-4 w-3" fill="none" stroke="currentColor"><path d="M1 4.500h7v7H1ZM8 7l3-1.500v5L8 9M2.500 2Q6 0 9.500 2M2.500 14Q6 16 9.500 14" /></svg>
          </button>
        </div>
        <time className="mt-3 text-center text-[11px] leading-[17px] whitespace-nowrap">
          3:38 PM
          <br />
          2/4/2023
        </time>
        <button aria-label="Notifications" className="relative mt-[18px] mb-4 block">
          <svg viewBox="0 0 16 17" className="h-[17px] w-4"><path fill="currentColor" fillRule="evenodd" d="M0 0h16v13H7l-3.500 4v-4H0ZM3 3v1h10V3ZM3 6v1h10V6ZM3 9v1h7V9Z" /></svg>
          <span className="absolute top-[7px] left-[7px] grid size-[18px] place-items-center rounded-full border border-[#c46870] bg-[#a3101f] text-[11px] leading-none font-semibold">
            16
          </span>
        </button>
      </div>
      <span className="h-1 shrink-0" />
    </aside>
  );
}

export default function App() {
  return (
    <div className="flex h-screen overflow-hidden bg-[#0a0c10] font-['Noto_Sans',sans-serif]">
      <div className="flex min-w-0 flex-1 flex-col">
        <TabStrip />
        <Toolbar />
        <BookmarksBar />
        <div className="flex min-h-0 flex-1">
          <ComparePage />
          <PageScrollbar />
        </div>
      </div>
      <Taskbar />
    </div>
  );
}
